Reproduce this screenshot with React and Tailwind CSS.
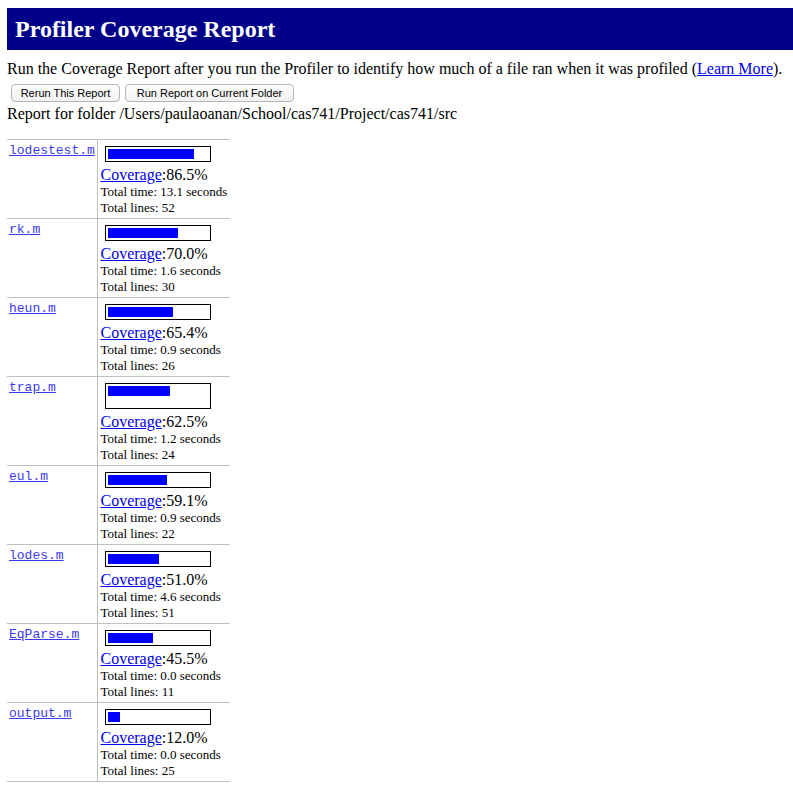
import React from "react";

const rows = [
  { name: "lodestest.m", pct: 86.5, time: "13.1", lines: 52 },
  { name: "rk.m", pct: 70.0, time: "1.6", lines: 30 },
  { name: "heun.m", pct: 65.4, time: "0.9", lines: 26 },
  { name: "trap.m", pct: 62.5, time: "1.2", lines: 24, tall: true },
  { name: "eul.m", pct: 59.1, time: "0.9", lines: 22 },
  { name: "lodes.m", pct: 51.0, time: "4.6", lines: 51 },
  { name: "EqParse.m", pct: 45.5, time: "0.0", lines: 11 },
  { name: "output.m", pct: 12.0, time: "0.0", lines: 25 },
];

export default function App() {
  return (
    <div className="min-h-[786px] bg-white pt-[8px] pl-[7px] font-['Liberation_Serif','Times_New_Roman',serif] text-black">
      <div className="flex h-[42px] items-center bg-[#000088] pl-[8px] text-[24px] font-bold leading-none text-white">
        Profiler Coverage Report
      </div>
      <p className="mt-[10px] text-[16px] leading-[18px]">
        Run the Coverage Report after you run the Profiler to identify how much of a file ran when it was profiled (
        <a href="#" className="text-[#0000ee] underline">Learn More</a>).
      </p>
      <div className="mt-[6px] ml-[4px] flex gap-[5px] font-['Liberation_Sans',Arial,sans-serif] text-[11px] leading-none">
        <button className="h-[18px] w-[109px] rounded-[4px] border border-[#b5b5b5] bg-gradient-to-b from-white to-[#f1f1f1] text-black">
          Rerun This Report
        </button>
        <button className="h-[18px] w-[169px] rounded-[4px] border border-[#b5b5b5] bg-gradient-to-b from-white to-[#f1f1f1] text-black">
          Run Report on Current Folder
        </button>
      </div>
      <p className="mt-[3px] text-[16px] leading-[18px]">
        Report for folder /Users/paulaoanan/School/cas741/Project/cas741/src
      </p>
      <table className="mt-[16px] w-[223px] border-collapse">
        <tbody>
          {rows.map((r) => (
            <tr key={r.name} className="border-y border-[#c0c0c0]">
              <td className="w-[90px] border-r border-[#c0c0c0] pt-[3px] pl-[2px] align-top leading-[15px]">
                <a
                  href="#"
                  className="block font-['Liberation_Mono','Courier_New',monospace] text-[13px] leading-[15px] text-[#3a3aee] underline"
                >
                  {r.name}
                </a>
              </td>
              <td className="pl-[3px] pb-[2px] align-top">
                <div
                  className={
                    "mt-[6px] ml-[4px] w-[106px] border border-black p-[2px] " +
                    (r.tall ? "h-[26px]" : "h-[16px]")
                  }
                >
                  <div className="h-[10px] bg-[#0000ff]" style={{ width: `${r.pct}px` }} />
                </div>
                <div className="mt-[4px] text-[16px] leading-[18px]">
                  <a href="#" className="text-[#0000ee] underline">Coverage</a>:{r.pct.toFixed(1)}%
                </div>
                <div className="text-[13px] leading-[16px]">Total time: {r.time} seconds</div>
                <div className="text-[13px] leading-[16px]">Total lines: {r.lines}</div>
              </td>
            </tr>
          ))}
        </tbody>
      </table>
    </div>
  );
}
